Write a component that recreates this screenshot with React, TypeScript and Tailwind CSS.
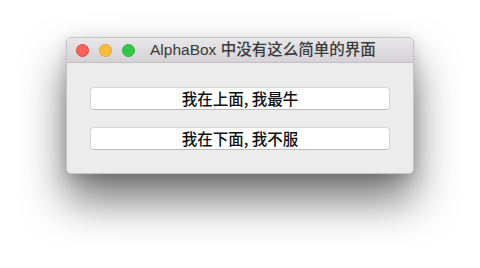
export default function App() {
  const font = '"Noto Sans CJK SC", "Liberation Sans", sans-serif';
  return (
    <div className="w-[480px] h-[268px] bg-white flex flex-col items-start" style={{ fontFamily: '"Liberation Sans", "Noto Sans CJK SC", sans-serif' }}>
      <div className="mt-[37px] ml-[66px] w-[348px] h-[137px] rounded-[5px] bg-[#ececec] flex flex-col overflow-hidden border border-[#c4c4c4] shadow-[0_26px_44px_rgba(0,0,0,0.55),0_4px_14px_rgba(0,0,0,0.15)]">
        <div className="h-[25px] flex items-center bg-gradient-to-b from-[#e9e7e9] to-[#d4d2d4] border-b border-[#c2c0c2] shrink-0">
          <div className="flex items-center gap-[10px] ml-[9px]">
            <div className="w-[13px] h-[13px] rounded-full bg-[#fc605c] border border-[#e4483f]" />
            <div className="w-[13px] h-[13px] rounded-full bg-[#fdbc40] border border-[#e2a52a]" />
            <div className="w-[13px] h-[13px] rounded-full bg-[#34c84a] border border-[#2bb03c]" />
          </div>
          <div className="ml-[15px] text-[15.5px] text-[#3a3a3a] leading-none font-medium">AlphaBox 中没有这么简单的界面</div>
        </div>
        <div className="flex flex-col px-[23px] pt-[24px] gap-[17px]">
          <div className="h-[23px] rounded-[4px] bg-white border border-[#d6d6d6] border-b-[#bcbcbc] flex items-center justify-center text-[15.5px] font-medium text-[#111]" style={{ fontFamily: font }}>我在上面, 我最牛</div>
          <div className="h-[23px] rounded-[4px] bg-white border border-[#d6d6d6] border-b-[#bcbcbc] flex items-center justify-center text-[15.5px] font-medium text-[#111]" style={{ fontFamily: font }}>我在下面, 我不服</div>
        </div>
      </div>
    </div>
  );
}
